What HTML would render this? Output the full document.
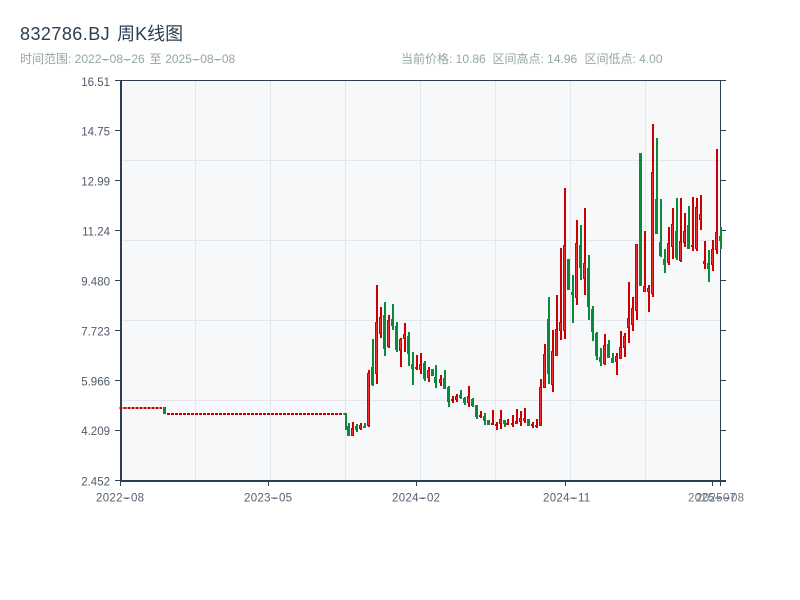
<!DOCTYPE html>
<html lang="zh">
<head>
<meta charset="utf-8">
<title>832786.BJ 周K线图</title>
<style>
html,body{margin:0;padding:0;background:#fff;width:800px;height:600px;overflow:hidden}
svg{display:block;font-family:"Liberation Sans","Noto Sans CJK SC",sans-serif}
</style>
</head>
<body>
<svg width="800" height="600" viewBox="0 0 800 600" xmlns="http://www.w3.org/2000/svg">
<rect width="800" height="600" fill="#fff"/>
<text x="20" y="40" font-size="18" fill="#2c3e50"><tspan letter-spacing=".45">832786.BJ</tspan><tspan dx="2"> 周K线图</tspan></text>
<text x="20" y="63" font-size="12" fill="#95a5a6">时间范围: 2022<tspan dx="2.15">-</tspan><tspan dx="2.15">08</tspan><tspan dx="2.15">-</tspan><tspan dx="2.15">26</tspan> <tspan dx="1.5">至</tspan> <tspan dx=".3">2025</tspan><tspan dx="2.15">-</tspan><tspan dx="2.15">08</tspan><tspan dx="2.15">-</tspan><tspan dx="2.15">08</tspan></text>
<path d="M101.8 59h7.4v1h-7.4zM123.4 59h7.4v1h-7.4zM192.2 59h7.4v1h-7.4zM213.9 59h7.4v1h-7.4z" fill="#95a5a6" opacity=".85"/>
<text x="401" y="63" font-size="12" fill="#95a5a6">当前价格: 10.86</text>
<text x="492.5" y="63" font-size="12" fill="#95a5a6">区间高点: 14.96</text>
<text x="584.5" y="63" font-size="12" fill="#95a5a6">区间低点: 4.00</text>

<rect x="121" y="81" width="599" height="400" fill="#f7f8fa"/>
<g shape-rendering="crispEdges">
<path d="M195.5 81V481M270.5 81V481M345.5 81V481M420.5 81V481M495.5 81V481M570.5 81V481M645.5 81V481M121 160.5H720M121 240.5H720M121 320.5H720M121 400.5H720" stroke="#e3e6ea" stroke-width="1" fill="none"/>
<path d="M120 80.5H721M720.5 80V482" stroke="#2c3e50" stroke-width="1" fill="none"/>
<path d="M121 80V482" stroke="#2c3e50" stroke-width="2" fill="none"/>
<path d="M120 481H726" stroke="#2c3e50" stroke-width="2" fill="none"/>
<path d="M115 80.5H120M115 130.5H120M115 180.5H120M115 230.5H120M115 280.5H120M115 330.5H120M115 380.5H120M115 430.5H120M115 480.5H120" stroke="#2c3e50" stroke-width="1" fill="none"/>
<path d="M721 80.5H726M721 130.5H726M721 180.5H726M721 230.5H726M721 280.5H726M721 330.5H726M721 380.5H726M721 430.5H726" stroke="#2c3e50" stroke-width="1" fill="none"/>
<path d="M120.5 482V486M268.5 482V486M416.5 482V486M565.5 482V486M712.5 482V486M720.5 482V486" stroke="#2c3e50" stroke-width="1" fill="none"/>
</g>

<g font-size="11.5" fill="#4f5a6a" text-anchor="end">
<text x="110" y="86">16.51</text>
<text x="110" y="135.5">14.75</text>
<text x="110" y="185.5">12.99</text>
<text x="110" y="235.5">11.24</text>
<text x="110" y="285.5">9.480</text>
<text x="110" y="335.5">7.723</text>
<text x="110" y="385.5">5.966</text>
<text x="110" y="435">4.209</text>
<text x="110" y="485.5">2.452</text>
</g>
<g font-size="11.5" fill="#555f6e" letter-spacing=".3">
<text x="96" y="501.5">2022<tspan dx="2">-</tspan><tspan dx="2">08</tspan></text>
<text x="244" y="501.5">2023<tspan dx="2">-</tspan><tspan dx="2">05</tspan></text>
<text x="392" y="501.5">2024<tspan dx="2">-</tspan><tspan dx="2">02</tspan></text>
<text x="543" y="501.5">2024<tspan dx="2">-</tspan><tspan dx="2">11</tspan></text>
<text x="688" y="501.5" opacity=".85">2025<tspan dx="2">-</tspan><tspan dx="2">07</tspan></text>
<text x="696" y="501.5" opacity=".85">2025<tspan dx="2">-</tspan><tspan dx="2">08</tspan></text>
</g>
<path d="M123 497.5h7v1h-7zM271 497.5h7v1h-7zM419 497.5h7v1h-7zM570 497.5h7v1h-7zM715 497.5h7v1h-7zM723 497.5h7v1h-7z" fill="#555f6e" opacity=".85"/>

<g fill="none" shape-rendering="crispEdges">
<path d="M119.5 408H162" stroke="#cc0000" stroke-width="2" stroke-dasharray="3 1"/>
<path d="M167 414H343.5" stroke="#cc0000" stroke-width="2" stroke-dasharray="3 1"/>
<path stroke="#0a8a3a" stroke-width="2" d="M346 413V430M349 423V436M357 424V432M365 423V428M373 339V386M385 302V356M393 304V330M397 322V352M409 332V366M413 352V385M425 361V381M433 369V376M436 365V388M445 370V389M449 386V407M461 390V399M465 397V405M473 398V407M477 405V419M485 413V425M489 420V425M505 420V427M529 419V426M549 297V384M569 259V290M573 275V323M581 225V280M589 255V320M593 306V341M597 332V360M601 348V366M609 340V358M613 353V363M641 153V286M657 138V234M661 199V257M665 249V273M677 198V260M689 206V249M709 250V282M721 227V249"/>
<path stroke="#0a8a3a" stroke-width="3" d="M345.5 413V415M164.5 407V414M348.5 426V436M356.5 426V430M364.5 426V428M372.5 367V385M384.5 315V349M392.5 319V326M396.5 326V350M408.5 336V354M412.5 364V369M424.5 363V379M432.5 369V376M435.5 377V383M444.5 378V389M448.5 387V402M460.5 395V398M464.5 398V403M472.5 399V406M476.5 405V417M484.5 416V421M488.5 420V425M504.5 420V424M528.5 419V426M548.5 319V374M568.5 259V290M572.5 292V295M580.5 245V268M588.5 268V307M592.5 309V332M596.5 333V356M600.5 357V362M608.5 344V358M612.5 358V363M640.5 153V286M656.5 199V234M660.5 242V256M664.5 259V265M676.5 231V258M688.5 225V249M708.5 263V269M720.5 236V241"/>
<path stroke="#cc0000" stroke-width="2" d="M353 422V436M361 423V430M369 370V427M377 285V384M381 307V338M389 315V348M401 338V367M405 323V352M417 355V370M421 353V374M429 367V382M441 375V386M453 396V403M457 394V402M469 386V407M481 411V418M493 410V425M497 422V430M501 410V429M508 419V425M513 415V427M517 409V424M521 411V426M525 408V423M533 422V428M537 419V428M541 379V426M545 344V388M553 330V392M557 295V356M561 248V340M565 188V339M577 220V305M585 208V295M605 334V365M617 353V375M621 331V359M625 333V357M629 282V343M633 297V331M637 244V320M645 231V292M649 285V312M653 124V297M669 227V265M673 208V259M681 198V262M685 213V247M693 197V251M697 198V251M701 195V230M705 241V269M713 240V271M717 149V254"/>
<path stroke="#cc0000" stroke-width="3" d="M352.5 428V436M360.5 425V429M368.5 373V426M376.5 322V374M380.5 317V334M388.5 320V347M400.5 339V351M404.5 334V339M416.5 367V369M420.5 364V370M428.5 370V378M440.5 379V383M452.5 399V401M456.5 396V400M468.5 396V403M480.5 415V417M492.5 423V425M496.5 424V426M500.5 419V424M507.5 423V425M512.5 423V425M516.5 421V424M520.5 418V422M524.5 418V421M532.5 424V426M536.5 425V427M540.5 387V426M544.5 354V388M552.5 351V385M556.5 329V356M560.5 322V331M564.5 245V331M576.5 243V298M584.5 263V279M604.5 345V364M616.5 356V362M620.5 347V359M624.5 336V348M628.5 318V328M632.5 308V325M636.5 244V311M644.5 286V292M648.5 288V292M652.5 172V294M668.5 243V263M672.5 224V247M680.5 241V261M684.5 231V243M692.5 245V247M696.5 207V249M700.5 214V220M704.5 261V264M712.5 249V265M716.5 232V250"/>
<path stroke="#f52a2a" stroke-width="1" d="M352.5 429V435M360.5 426V428M368.5 374V425M376.5 323V373M380.5 318V333M388.5 321V346M400.5 340V350M404.5 335V338M420.5 365V369M428.5 371V377M440.5 380V382M456.5 397V399M468.5 397V402M500.5 420V423M516.5 422V423M520.5 419V421M524.5 419V420M540.5 388V425M544.5 355V387M552.5 352V384M556.5 330V355M560.5 323V330M564.5 246V330M576.5 244V297M584.5 264V278M604.5 346V363M616.5 357V361M620.5 348V358M624.5 337V347M628.5 319V327M632.5 309V324M636.5 245V310M644.5 287V291M648.5 289V291M652.5 173V293M668.5 244V262M672.5 225V246M680.5 242V260M684.5 232V242M696.5 208V248M700.5 215V219M704.5 262V263M712.5 250V264M716.5 233V249"/>
</g>
</svg>
</body>
</html>
